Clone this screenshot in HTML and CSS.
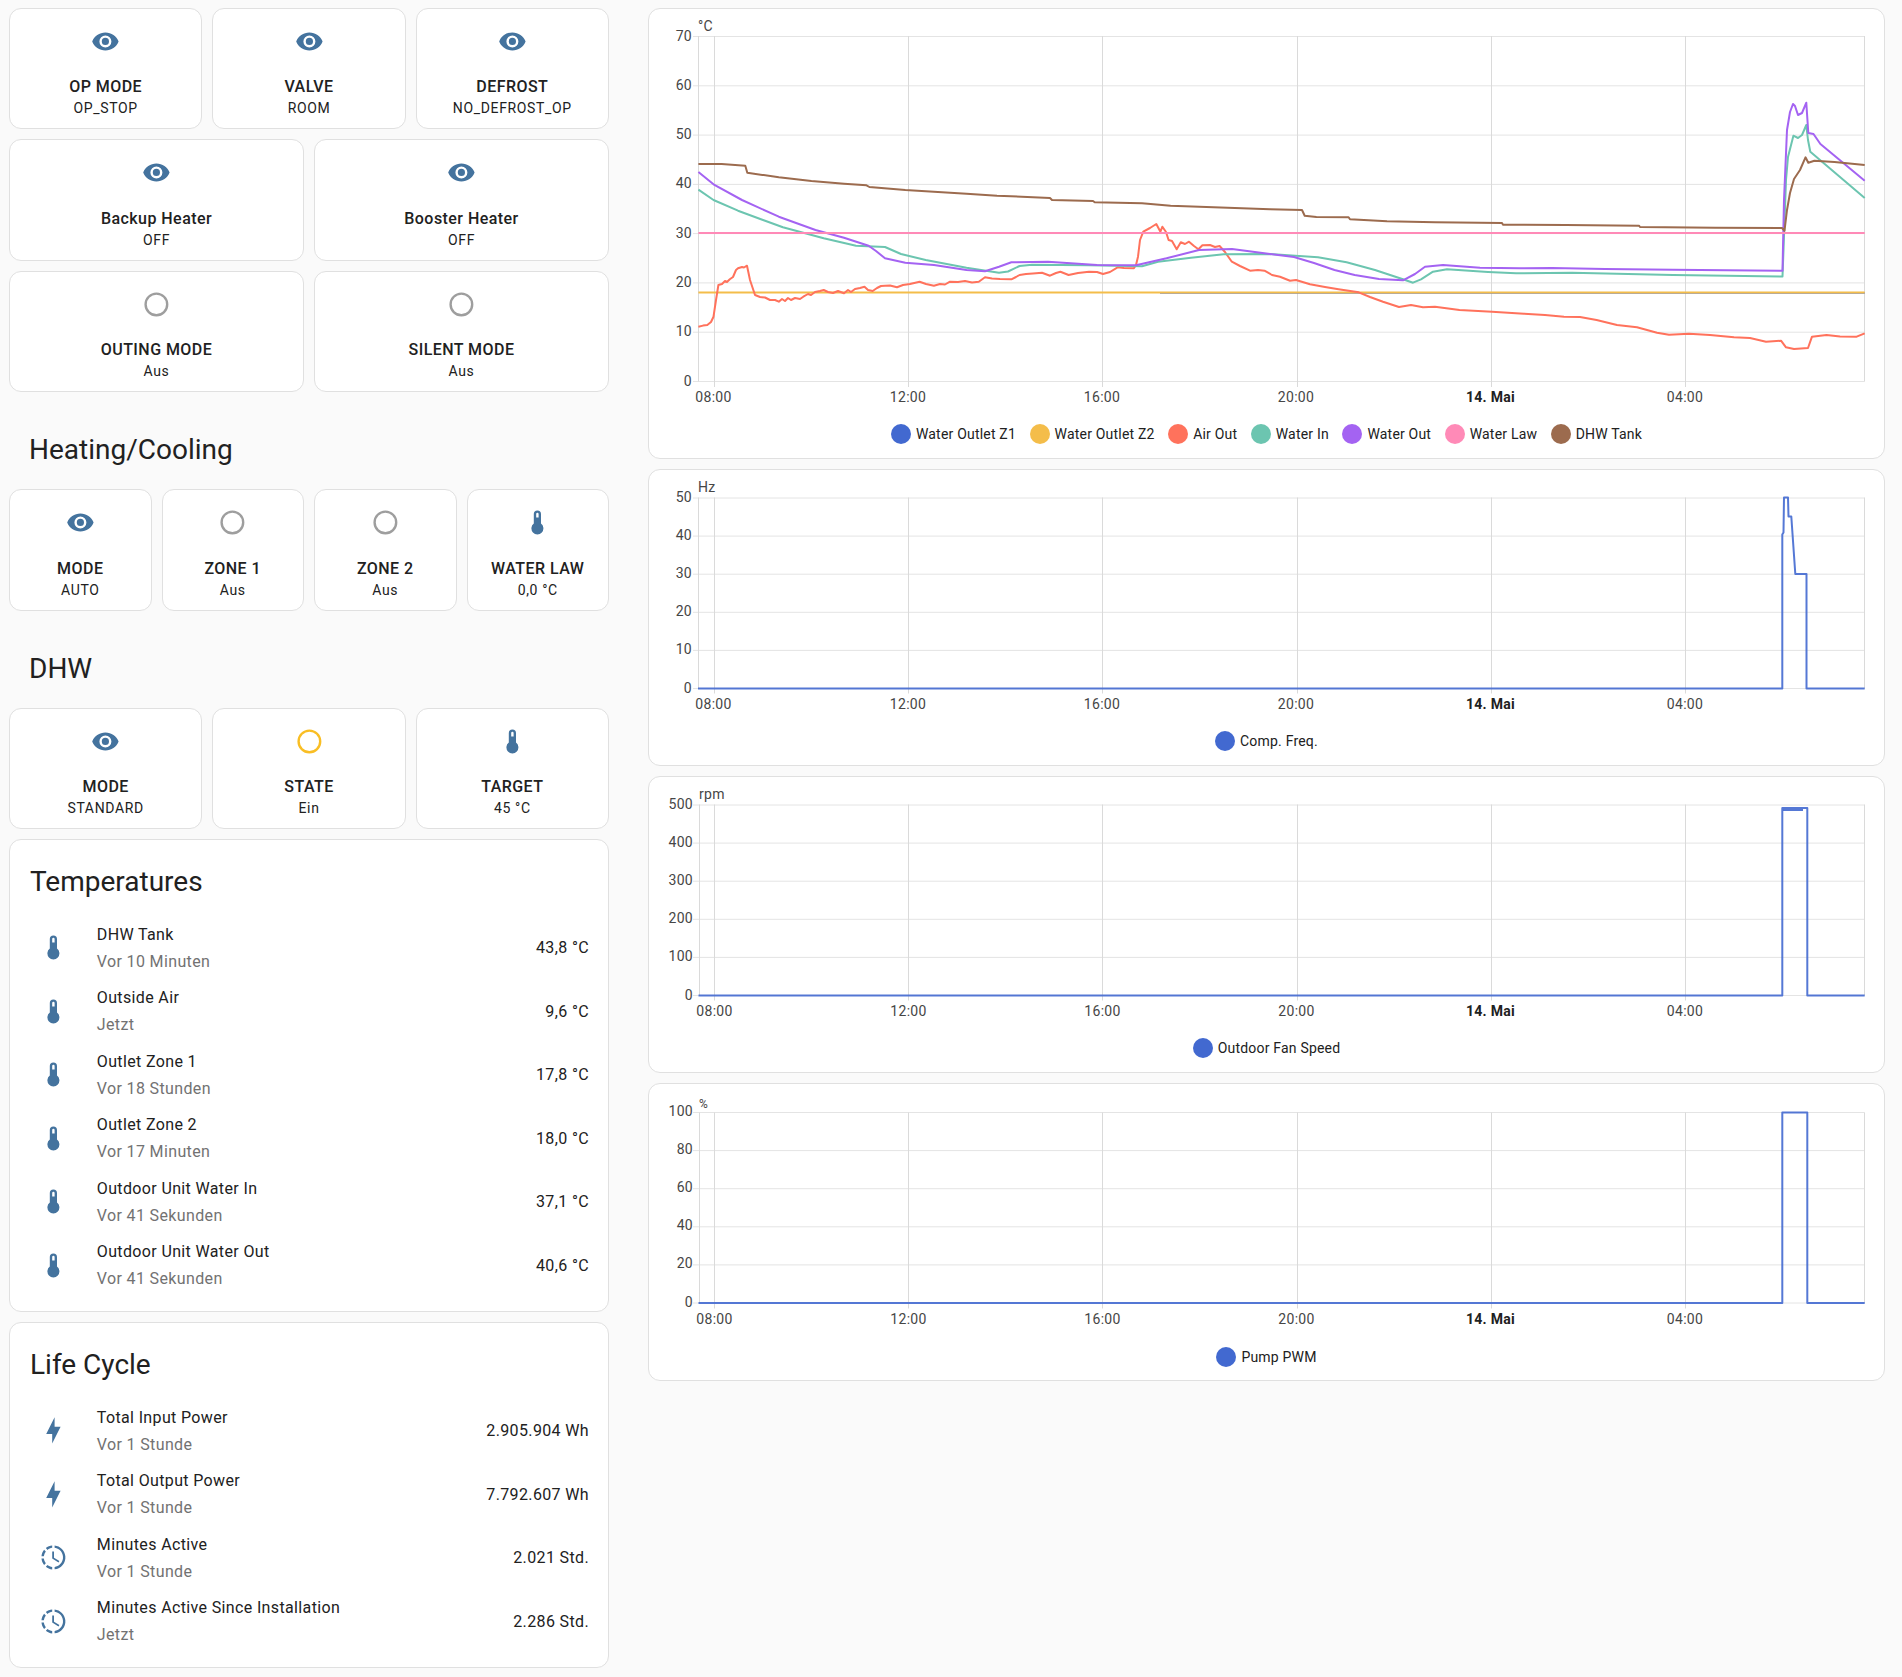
FILE: index.html
```html
<!DOCTYPE html>
<html>
<head>
  <title>Heat Pump</title>
  <link rel="stylesheet" href="styles.css">
</head>
<body>
  <svg class="Sprite">
    <symbol id="eye" viewBox="0 0 24 24"><path d="M12,9A3,3 0 0,0 9,12A3,3 0 0,0 12,15A3,3 0 0,0 15,12A3,3 0 0,0 12,9M12,17A5,5 0 0,1 7,12A5,5 0 0,1 12,7A5,5 0 0,1 17,12A5,5 0 0,1 12,17M12,4.5C7,4.5 2.73,7.61 1,12C2.73,16.39 7,19.5 12,19.5C17,19.5 21.27,16.39 23,12C21.27,7.61 17,4.5 12,4.5Z"/></symbol>
    <symbol id="circle" viewBox="0 0 24 24"><path d="M12,20A8,8 0 0,1 4,12A8,8 0 0,1 12,4A8,8 0 0,1 20,12A8,8 0 0,1 12,20M12,2A10,10 0 0,0 2,12A10,10 0 0,0 12,22A10,10 0 0,0 22,12A10,10 0 0,0 12,2Z"/></symbol>
    <symbol id="thermometer" viewBox="0 0 24 24"><path d="M15 13V5A3 3 0 0 0 9 5V13A5 5 0 1 0 15 13M12 4A1 1 0 0 1 13 5V8H11V5A1 1 0 0 1 12 4Z"/></symbol>
    <symbol id="bolt" viewBox="0 0 24 24"><path d="M11 15H6L13 1V9H18L11 23V15Z"/></symbol>
    <symbol id="clock" viewBox="0 0 24 24"><path d="M13,2.03V2.05L13,4.05C17.39,4.59 20.5,8.58 19.96,12.97C19.5,16.61 16.64,19.5 13,19.93V21.93C18.5,21.38 22.5,16.5 21.95,11C21.5,6.25 17.73,2.5 13,2.03M11,2.06C9.05,2.25 7.19,3 5.67,4.26L7.1,5.74C8.22,4.84 9.57,4.26 11,4.06V2.06M4.26,5.67C3,7.19 2.25,9.04 2.05,11H4.05C4.24,9.58 4.8,8.23 5.69,7.1L4.26,5.67M2.06,13C2.26,14.96 3.03,16.81 4.27,18.33L5.69,16.9C4.81,15.77 4.24,14.42 4.06,13H2.06M7.1,18.37L5.67,19.74C7.18,21 9.04,21.79 11,22V20C9.58,19.82 8.23,19.25 7.1,18.37M12.5,7V12.25L17,14.92L16.25,16.15L11,13V7H12.5Z"/></symbol>
  </svg>

  <div class="Page">
    <div class="Stack">
      <div class="Row Three">
        <div class="Card Tile"><svg class="Icon"><use href="#eye"/></svg><div class="Name">OP MODE</div><div class="State">OP_STOP</div></div>
        <div class="Card Tile"><svg class="Icon"><use href="#eye"/></svg><div class="Name">VALVE</div><div class="State">ROOM</div></div>
        <div class="Card Tile"><svg class="Icon"><use href="#eye"/></svg><div class="Name">DEFROST</div><div class="State">NO_DEFROST_OP</div></div>
      </div>
      <div class="Row Two">
        <div class="Card Tile"><svg class="Icon"><use href="#eye"/></svg><div class="Name">Backup Heater</div><div class="State">OFF</div></div>
        <div class="Card Tile"><svg class="Icon"><use href="#eye"/></svg><div class="Name">Booster Heater</div><div class="State">OFF</div></div>
      </div>
      <div class="Row Two">
        <div class="Card Tile"><svg class="Icon Off"><use href="#circle"/></svg><div class="Name">OUTING MODE</div><div class="State">Aus</div></div>
        <div class="Card Tile"><svg class="Icon Off"><use href="#circle"/></svg><div class="Name">SILENT MODE</div><div class="State">Aus</div></div>
      </div>

      <h2 class="Heading">Heating/Cooling</h2>
      <div class="Row Four">
        <div class="Card Tile"><svg class="Icon"><use href="#eye"/></svg><div class="Name">MODE</div><div class="State">AUTO</div></div>
        <div class="Card Tile"><svg class="Icon Off"><use href="#circle"/></svg><div class="Name">ZONE 1</div><div class="State">Aus</div></div>
        <div class="Card Tile"><svg class="Icon Off"><use href="#circle"/></svg><div class="Name">ZONE 2</div><div class="State">Aus</div></div>
        <div class="Card Tile"><svg class="Icon"><use href="#thermometer"/></svg><div class="Name">WATER LAW</div><div class="State">0,0 °C</div></div>
      </div>

      <h2 class="Heading">DHW</h2>
      <div class="Row Three">
        <div class="Card Tile"><svg class="Icon"><use href="#eye"/></svg><div class="Name">MODE</div><div class="State">STANDARD</div></div>
        <div class="Card Tile"><svg class="Icon On"><use href="#circle"/></svg><div class="Name">STATE</div><div class="State">Ein</div></div>
        <div class="Card Tile"><svg class="Icon"><use href="#thermometer"/></svg><div class="Name">TARGET</div><div class="State">45 °C</div></div>
      </div>

      <div class="Card Entities">
        <h1 class="Title">Temperatures</h1>
        <div class="Entity"><svg class="Icon"><use href="#thermometer"/></svg><div class="Info"><div>DHW Tank</div><div class="Ago">Vor 10 Minuten</div></div><div class="Value">43,8 °C</div></div>
        <div class="Entity"><svg class="Icon"><use href="#thermometer"/></svg><div class="Info"><div>Outside Air</div><div class="Ago">Jetzt</div></div><div class="Value">9,6 °C</div></div>
        <div class="Entity"><svg class="Icon"><use href="#thermometer"/></svg><div class="Info"><div>Outlet Zone 1</div><div class="Ago">Vor 18 Stunden</div></div><div class="Value">17,8 °C</div></div>
        <div class="Entity"><svg class="Icon"><use href="#thermometer"/></svg><div class="Info"><div>Outlet Zone 2</div><div class="Ago">Vor 17 Minuten</div></div><div class="Value">18,0 °C</div></div>
        <div class="Entity"><svg class="Icon"><use href="#thermometer"/></svg><div class="Info"><div>Outdoor Unit Water In</div><div class="Ago">Vor 41 Sekunden</div></div><div class="Value">37,1 °C</div></div>
        <div class="Entity"><svg class="Icon"><use href="#thermometer"/></svg><div class="Info"><div>Outdoor Unit Water Out</div><div class="Ago">Vor 41 Sekunden</div></div><div class="Value">40,6 °C</div></div>
      </div>

      <div class="Card Entities">
        <h1 class="Title">Life Cycle</h1>
        <div class="Entity"><svg class="Icon"><use href="#bolt"/></svg><div class="Info"><div>Total Input Power</div><div class="Ago">Vor 1 Stunde</div></div><div class="Value">2.905.904 Wh</div></div>
        <div class="Entity"><svg class="Icon"><use href="#bolt"/></svg><div class="Info"><div>Total Output Power</div><div class="Ago">Vor 1 Stunde</div></div><div class="Value">7.792.607 Wh</div></div>
        <div class="Entity"><svg class="Icon"><use href="#clock"/></svg><div class="Info"><div>Minutes Active</div><div class="Ago">Vor 1 Stunde</div></div><div class="Value">2.021 Std.</div></div>
        <div class="Entity"><svg class="Icon"><use href="#clock"/></svg><div class="Info"><div>Minutes Active Since Installation</div><div class="Ago">Jetzt</div></div><div class="Value">2.286 Std.</div></div>
      </div>
    </div>

    <div class="Stack Charts">
      <!-- the viewBoxes use page pixels so the data below reads like the screen -->
      <div class="Card Chart">
        <svg class="Plot Tall" viewBox="649 9 1235 406">
          <g class="Grid">
            <path d="M693 36.5H1864.5M693 85.8H1864.5M693 135.1H1864.5M693 184.4H1864.5M693 233.6H1864.5M693 282.9H1864.5M693 332.2H1864.5M693 381.5H1864.5"/>
            <path d="M698.5 36V381.5M714.5 36V387M908.5 36V387M1102.5 36V387M1297.5 36V387M1491.5 36V387M1685.5 36V387M1864.5 36V381.5"/>
          </g>
          <g class="YAxis">
            <text x="692" y="36.5">70</text><text x="692" y="85.8">60</text><text x="692" y="135.1">50</text><text x="692" y="184.4">40</text><text x="692" y="233.6">30</text><text x="692" y="282.9">20</text><text x="692" y="332.2">10</text><text x="692" y="381.5">0</text>
          </g>
          <text class="Unit" x="698" y="25.5">°C</text>
          <g class="XAxis">
            <text x="713.5" y="397">08:00</text><text x="908" y="397">12:00</text><text x="1102" y="397">16:00</text><text x="1296" y="397">20:00</text><text class="Bold" x="1490.5" y="397">14. Mai</text><text x="1685" y="397">04:00</text>
          </g>
          <polyline class="Line Blue Under" points="1160,293 1864.7,293"/>
          <polyline class="Line Orange" points="698.4,292.5 1864.7,292.5"/>
          <polyline class="Line Red" points="698.4,326.7 703,325.6 707.3,325 711,322 713.5,316.7 716,300 718.4,285 722,284 725,281 727,282 729.8,279.3 733,277 736,270 738,268.3 742,267 744,267.5 747,265.7 750,280 755,295 760,297 765,297.5 770,300 775,300 778.8,301.7 782,299 785,301 788,298 791,300 795,298 800,299 803.3,296.7 808,294 811,295 815,292 820,291 823.7,290 828,292 833,293 838,291 844,293.3 848,290 851,292 855,289 860,288 864.5,286.7 868,290 872.7,291 877,288 881,286 885,285.7 890,285.5 897,287.3 903,285 910,284 919.6,281.7 926,284 933.9,285.7 940,284 945,284.5 950,281.7 958,282 965,281 972,282.5 978.8,281.7 985,277.3 992,278.5 1000,279 1011.4,279.3 1016,277 1019.6,275 1026,274 1033,273.5 1042,272.7 1050,275.7 1056,273 1060.4,271.7 1068.6,275 1078,273 1089,271.7 1097,272 1103,274 1110,272 1117.6,267.3 1124,268 1133.9,268.3 1136,265 1138,256.7 1140,240 1143.3,231.7 1150,228 1156.3,224 1160.4,231.7 1162.4,226.7 1166,232 1168.6,240 1172,241 1176.7,249.3 1180.8,242.3 1185,244 1189,241.7 1194,246 1198.4,249.3 1202.4,245.3 1210,245 1215,247 1219.6,246 1225,252 1231.8,261.7 1240,266 1250,270.7 1258,270 1264.5,270.7 1272,275 1280,276.7 1290,280.7 1296,280 1310,284.3 1325,287 1338.5,289.3 1358.7,292.3 1370,297 1383,301.7 1399,307 1411,305 1423,307.3 1435,306.7 1459.5,310 1492,311.7 1524,313.7 1545,315 1564,316.7 1580,317 1596.6,320 1617,325 1637,327.3 1657,332.7 1669,334.7 1689,333.7 1710,335 1734,337.3 1750,338 1766,341.7 1781,340.7 1786,347.3 1794,349 1808,348 1812,336.7 1826.5,335 1840,336.5 1856.7,336.7 1864.7,333.3"/>
          <polyline class="Line Teal" points="698.4,189.7 713.5,200 738,210.7 782.9,227.3 823.7,238.3 856,245.7 885,247 901,254 925.7,260 966.5,267.7 999,272.7 1008,271.5 1019.6,266 1032,264.7 1089,265.3 1142,266.3 1158,261.7 1191,257.7 1223.7,254.3 1270,254 1318,257.3 1346.6,262.3 1375,270 1403,279.3 1413,282.7 1421,279.3 1433,271.7 1447,269.3 1488,272 1516,273.3 1572,272.7 1673,275 1782.5,276.5 1783.5,250 1786,180 1788,157 1793.4,135.7 1798,138 1802,135 1806.3,125 1808,140 1810.3,151.7 1864.7,198"/>
          <polyline class="Line Purple" points="698.4,172 713.5,184.3 742,200 778.8,216.7 815.5,230 844,237.7 868.6,245.7 876,251 885,258.3 905.3,262.7 934,265 966.5,270 985,271.3 999,266.7 1011.4,262.3 1048,261.7 1097,265 1136,265.3 1166.5,258.3 1199,250 1232,249 1270,254 1294,257 1314,263 1334.5,270 1354.7,275 1379,279 1403,280.3 1415,274 1425,266.7 1443,265 1480,267.7 1520,268.3 1552,268 1605,269 1673,269.7 1782.5,270.7 1784,200 1787,130 1790,112 1793,104 1795,106 1798,115 1802,113 1806.3,102.7 1808.3,133 1813.5,134 1820.4,144 1864.7,180.7"/>
          <polyline class="Line Pink" points="698.4,233 1864.7,233"/>
          <polyline class="Line Brown" points="698.4,164 721.6,164 745.3,165.7 747.3,172.7 778.8,177.3 811.4,181 844,183.7 866.5,185.3 869.4,187 905.3,190 966.5,193.7 997,195.7 1050,198 1052,200 1093,201 1094.7,202.3 1142,203.3 1170.6,205.7 1227.8,207.7 1270,209.3 1302,210 1304.7,215.7 1316.4,217 1348.6,217.3 1350,219.3 1387,221.3 1435,222.3 1502,223 1503,224.7 1566,225 1639,225.7 1640,227 1715.6,227.7 1782,228 1784.5,230.7 1787,210 1790,193 1794,179 1800,170 1805.5,157.3 1808.3,162.7 1814.4,160.7 1834.5,162 1864.7,165"/>
        </svg>
        <div class="Legend">
          <span><i class="Blue"></i>Water Outlet Z1</span>
          <span><i class="Orange"></i>Water Outlet Z2</span>
          <span><i class="Red"></i>Air Out</span>
          <span><i class="Teal"></i>Water In</span>
          <span><i class="Purple"></i>Water Out</span>
          <span><i class="Pink"></i>Water Law</span>
          <span><i class="Brown"></i>DHW Tank</span>
        </div>
      </div>

      <div class="Card Chart">
        <svg class="Plot" viewBox="649 469.5 1235 251">
          <g class="Grid">
            <path d="M693 497.5H1864.5M693 535.6H1864.5M693 573.7H1864.5M693 611.8H1864.5M693 649.9H1864.5M693 688H1864.5"/>
            <path d="M698.5 497V688M714.5 497V693M908.5 497V693M1102.5 497V693M1297.5 497V693M1491.5 497V693M1685.5 497V693M1864.5 497V688"/>
          </g>
          <g class="YAxis">
            <text x="692" y="497.5">50</text><text x="692" y="535.6">40</text><text x="692" y="573.7">30</text><text x="692" y="611.8">20</text><text x="692" y="649.9">10</text><text x="692" y="688">0</text>
          </g>
          <text class="Unit" x="698" y="486.5">Hz</text>
          <g class="XAxis">
            <text x="713.5" y="703.5">08:00</text><text x="908" y="703.5">12:00</text><text x="1102" y="703.5">16:00</text><text x="1296" y="703.5">20:00</text><text class="Bold" x="1490.5" y="703.5">14. Mai</text><text x="1685" y="703.5">04:00</text>
          </g>
          <polyline class="Line Blue" points="698,688 1782.3,688 1782.3,534 1783.5,532 1784,497 1788,497 1788.5,516 1791.3,516 1795.3,573.5 1806.5,573.5 1806.5,688 1864.7,688"/>
        </svg>
        <div class="Legend">
          <span><i class="Blue"></i>Comp. Freq.</span>
        </div>
      </div>

      <div class="Card Chart">
        <svg class="Plot" viewBox="649 776.5 1235 251">
          <g class="Grid">
            <path d="M693 804.5H1864.5M693 842.6H1864.5M693 880.7H1864.5M693 918.8H1864.5M693 956.9H1864.5M693 995H1864.5"/>
            <path d="M699.5 804V995M714.5 804V1000M908.5 804V1000M1102.5 804V1000M1297.5 804V1000M1491.5 804V1000M1685.5 804V1000M1864.5 804V995"/>
          </g>
          <g class="YAxis">
            <text x="693" y="804.5">500</text><text x="693" y="842.6">400</text><text x="693" y="880.7">300</text><text x="693" y="918.8">200</text><text x="693" y="956.9">100</text><text x="693" y="995">0</text>
          </g>
          <text class="Unit" x="699" y="793.5">rpm</text>
          <g class="XAxis">
            <text x="714.5" y="1010.5">08:00</text><text x="908.5" y="1010.5">12:00</text><text x="1102.5" y="1010.5">16:00</text><text x="1296.5" y="1010.5">20:00</text><text class="Bold" x="1490.5" y="1010.5">14. Mai</text><text x="1685" y="1010.5">04:00</text>
          </g>
          <polyline class="Line Blue" points="698.5,995 1782.3,995 1782.3,807.5 1807.3,807.5 1807.3,995 1864.7,995"/>
          <polyline class="Line Blue" points="1783,809.5 1803,809.5"/>
        </svg>
        <div class="Legend">
          <span><i class="Blue"></i>Outdoor Fan Speed</span>
        </div>
      </div>

      <div class="Card Chart">
        <svg class="Plot" viewBox="649 1083.5 1235 251">
          <g class="Grid">
            <path d="M693 1112H1864.5M693 1150.1H1864.5M693 1188.2H1864.5M693 1226.3H1864.5M693 1264.4H1864.5M693 1302.5H1864.5"/>
            <path d="M699.5 1112V1302.5M714.5 1112V1308M908.5 1112V1308M1102.5 1112V1308M1297.5 1112V1308M1491.5 1112V1308M1685.5 1112V1308M1864.5 1112V1302.5"/>
          </g>
          <g class="YAxis">
            <text x="693" y="1111.5">100</text><text x="693" y="1149.6">80</text><text x="693" y="1187.7">60</text><text x="693" y="1225.8">40</text><text x="693" y="1263.9">20</text><text x="693" y="1302">0</text>
          </g>
          <text class="Unit Small" x="699" y="1103">%</text>
          <g class="XAxis">
            <text x="714.5" y="1318">08:00</text><text x="908.5" y="1318">12:00</text><text x="1102.5" y="1318">16:00</text><text x="1296.5" y="1318">20:00</text><text class="Bold" x="1490.5" y="1318">14. Mai</text><text x="1685" y="1318">04:00</text>
          </g>
          <polyline class="Line Blue" points="698.5,1302.5 1782.3,1302.5 1782.3,1112 1807.3,1112 1807.3,1302.5 1864.7,1302.5"/>
        </svg>
        <div class="Legend">
          <span><i class="Blue"></i>Pump PWM</span>
        </div>
      </div>
    </div>
  </div>
</body>
</html>
```

FILE: styles.css
```css
*
{
  margin: 0;
  padding: 0;
  box-sizing: border-box;
}

body
{
  background: #fafafa;
  color: #212121;
  font-family: Roboto, 'Noto Sans', sans-serif;
}

.Sprite
{
  display: none;
}

.Page
{
  display: grid;
  grid-template-columns: 600px 1237px;
  column-gap: 39px;
  align-items: start;
  padding: 7.5px 0 0 9px;
}

.Stack
{
  display: flex;
  flex-direction: column;
  gap: 10px;
}

.Charts
{
  margin-top: 0.5px;
}

.Card
{
  background: #ffffff;
  border: 1px solid #e0e0e0;
  border-radius: 12px;
}

.Row
{
  display: grid;
  gap: 10px;
}

.Two { grid-template-columns: repeat(2, 1fr); }
.Three { grid-template-columns: repeat(3, 1fr); }
.Four { grid-template-columns: repeat(4, 1fr); }

/* button cards */
.Tile
{
  height: 121.5px;
  padding-top: 18px;
  display: flex;
  flex-direction: column;
  align-items: center;
  text-align: center;
}

.Icon
{
  width: 28.8px;
  height: 28.8px;
  flex: none;
  fill: #44739e;
}

.Icon.Off { fill: #9e9e9e; }
.Icon.On { fill: #f9be24; }

.Name
{
  margin-top: 21px;
  font-size: 16px;
  font-weight: 500;
  line-height: 22px;
  letter-spacing: 0.45px;
}

.State
{
  font-size: 14px;
  line-height: 21px;
  letter-spacing: 0.65px;
}

.Heading
{
  height: 77px;
  padding-top: 28px;
  padding-left: 20px;
  font-size: 28px;
  font-weight: 400;
  line-height: 40px;
}

/* entity lists */
.Entities
{
  padding: 0 20px 14px;
}

.Title
{
  height: 76px;
  padding-top: 22px;
  font-size: 28px;
  font-weight: 400;
  line-height: 40px;
}

.Entity
{
  display: flex;
  align-items: center;
  height: 63.5px;
  font-size: 16px;
  letter-spacing: 0.36px;
}

.Entity .Icon
{
  margin-left: 9px;
  margin-right: 29px;
}

.Info
{
  flex: 1;
  line-height: 27px;
}

.Ago
{
  color: #727272;
}

.Value
{
  margin-right: -1px;
}

/* charts */
.Chart
{
  height: 297px;
}

.Chart:first-child
{
  height: 450.5px;
}

.Chart:last-child
{
  height: 298.5px;
}

.Plot
{
  display: block;
  width: 1235px;
  height: 251px;
}

.Plot.Tall
{
  height: 406px;
}

.Grid path
{
  fill: none;
  stroke: #e4e4e4;
  stroke-width: 1;
}

.Grid path:nth-child(2)
{
  stroke: #dadada;
}

.Plot text
{
  font-size: 14px;
  fill: #464646;
  letter-spacing: 0.3px;
  dominant-baseline: central;
}

.YAxis { transform: translateY(-1px); }
.YAxis text { text-anchor: end; }
.XAxis text { text-anchor: middle; }
.XAxis .Bold { font-weight: 700; fill: #212121; }
.Plot .Small { font-size: 12px; }

.Line
{
  fill: none;
  stroke-width: 2;
  stroke-linejoin: round;
}

.Line.Blue { stroke: #4269d0; stroke-opacity: 0.9; }
.Line.Under { stroke-width: 1.5; }
.Line.Orange { stroke: #f4bd4a; }
.Line.Red { stroke: #ff725c; }
.Line.Teal { stroke: #6cc5b0; }
.Line.Purple { stroke: #a463f2; }
.Line.Pink { stroke: #ff8ab7; }
.Line.Brown { stroke: #9c6b4e; }

.Legend
{
  display: flex;
  justify-content: center;
  gap: 13.5px;
  height: 24px;
  margin-top: 8px;
  font-size: 14px;
  letter-spacing: 0.2px;
}

.Tall + .Legend
{
  margin-top: 7px;
}

.Chart:last-child .Legend
{
  margin-top: 10px;
}

.Legend span
{
  display: flex;
  align-items: center;
}

.Legend i
{
  width: 20px;
  height: 20px;
  margin-right: 5px;
  border-radius: 50%;
}

.Legend .Blue { background: #4269d0; }
.Legend .Orange { background: #f4bd4a; }
.Legend .Red { background: #ff725c; }
.Legend .Teal { background: #6cc5b0; }
.Legend .Purple { background: #a463f2; }
.Legend .Pink { background: #ff8ab7; }
.Legend .Brown { background: #9c6b4e; }
```
